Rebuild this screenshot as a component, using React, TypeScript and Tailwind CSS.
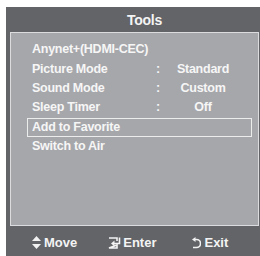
import React from "react";

const font = { fontFamily: '"Liberation Sans", Arial, sans-serif' };

function MoveIcon() {
  return (
    <svg width="9" height="13" viewBox="0 0 9 13" className="block">
      <polygon points="4.5,0 9,5 0,5" fill="#f2f2f2" />
      <polygon points="4.5,13 9,8 0,8" fill="#f2f2f2" />
    </svg>
  );
}

function EnterIcon() {
  return (
    <svg width="13" height="12" viewBox="0 0 13 12" className="block">
      <path d="M1 1 H9 V4 M9 8 V11 H1 Z" fill="none" stroke="#f2f2f2" strokeWidth="1.6" />
      <path d="M11.5 0.5 V6.5 H5" fill="none" stroke="#f2f2f2" strokeWidth="1.6" />
      <polygon points="3,6.5 6.5,3.5 6.5,9.5" fill="#f2f2f2" />
    </svg>
  );
}

function ExitIcon() {
  return (
    <svg width="9" height="12" viewBox="0 0 9 12" className="block">
      <path d="M2 2.5 H4.5 A4 4 0 0 1 4.5 10.5 H1" fill="none" stroke="#f2f2f2" strokeWidth="1.6" />
      <polygon points="0,2.5 3.5,0 3.5,5" fill="#f2f2f2" />
    </svg>
  );
}

const rows: { label: string; value?: string; selected?: boolean }[] = [
  { label: "Anynet+(HDMI-CEC)" },
  { label: "Picture Mode", value: "Standard" },
  { label: "Sound Mode", value: "Custom" },
  { label: "Sleep Timer", value: "Off" },
  { label: "Add to Favorite", selected: true },
  { label: "Switch to Air" },
];

export default function App() {
  return (
    <div className="w-[260px] h-[256px] bg-white overflow-hidden" style={font}>
      <div className="ml-[6px] mt-[7px] w-[254px] h-[249px] bg-[#636468] flex flex-col">
        <div className="h-[25px] flex items-center justify-center pl-[23px] pt-[1px] text-[14px] font-bold text-[#f4f4f4] tracking-[-0.3px]">
          Tools
        </div>
        <div className="ml-[4px] mr-[1px] h-[194px] bg-[#a6a7ab] border border-[#dcdcde] pt-[7px] pl-[16px] pr-[6px]">
          {rows.map((r) => (
            <div
              key={r.label}
              className={`h-[19.4px] flex items-center text-[12.5px] font-bold text-[#f6f6f6] tracking-[-0.25px] ${
                r.selected ? "border border-[#ececec] pl-[4px]" : "pl-[5px]"
              }`}
            >
              <span className="w-[124px] whitespace-nowrap">{r.label}</span>
              {r.value && (
                <>
                  <span className="w-[8px]">:</span>
                  <span className="w-[78px] text-center whitespace-nowrap">{r.value}</span>
                </>
              )}
            </div>
          ))}
        </div>
        <div className="flex-1 flex items-center text-[13px] font-bold text-[#f4f4f4] pt-[3px]">
          <div className="flex items-center ml-[26px]">
            <MoveIcon />
            <span className="ml-[3px]">Move</span>
          </div>
          <div className="flex items-center ml-[31px]">
            <EnterIcon />
            <span className="ml-[2px]">Enter</span>
          </div>
          <div className="flex items-center ml-[36px]">
            <ExitIcon />
            <span className="ml-[3px]">Exit</span>
          </div>
        </div>
      </div>
    </div>
  );
}
